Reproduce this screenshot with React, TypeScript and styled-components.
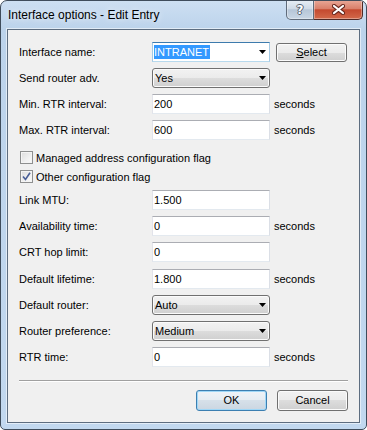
import styled, { createGlobalStyle } from "styled-components";

const GlobalStyle = createGlobalStyle`
  html, body {
    margin: 0;
    padding: 0;
    background: #ffffff;
  }
  body {
    font-family: "Liberation Sans", Arial, sans-serif;
    font-size: 11px;
    color: #000000;
  }
`;

const Window = styled.div`
  width: 367px;
  height: 430px;
  box-sizing: border-box;
  border: 1px solid #3f4c5b;
  border-radius: 7px 7px 5px 5px;
  background: linear-gradient(180deg, #cddff2 0, #bcd3eb 28px, #c2d8ef 100%);
  display: flex;
  flex-direction: column;
  overflow: hidden;
`;

const TitleBar = styled.div`
  height: 28px;
  display: flex;
  align-items: flex-start;
  justify-content: space-between;
`;

const TitleText = styled.div`
  font-family: "Liberation Sans", Arial, sans-serif;
  font-size: 12px;
  line-height: 15px;
  padding: 7px 0 0 7px;
  text-shadow: 0 0 6px rgba(255, 255, 255, 0.9);
`;

const CaptionButtons = styled.div`
  display: flex;
  margin-top: -1px;
  margin-right: 3px;
`;

const CaptionButton = styled.div<{ $close?: boolean }>`
  height: 20px;
  width: ${(p) => (p.$close ? 49 : 28)}px;
  box-sizing: border-box;
  border: 1px solid ${(p) => (p.$close ? "#4f2a26" : "#5f6b7a")};
  border-top: none;
  border-left-width: ${(p) => (p.$close ? 0 : 1)}px;
  border-radius: ${(p) => (p.$close ? "0 0 5px 0" : "0 0 0 5px")};
  background: ${(p) =>
    p.$close
      ? "linear-gradient(180deg, #e9a999 0%, #d9806b 45%, #c4492f 52%, #d2694a 100%)"
      : "linear-gradient(180deg, #e8eff6 0%, #d0dbe7 45%, #b6c6d8 52%, #c9d7e5 100%)"};
  box-shadow: inset 0 0 0 1px rgba(255, 255, 255, 0.35);
  display: flex;
  align-items: center;
  justify-content: center;
`;

const HelpGlyph = styled.span`
  font-family: "DejaVu Sans", sans-serif;
  font-weight: bold;
  font-size: 12px;
  line-height: 12px;
  color: #ffffff;
  text-shadow: 1px 0 0 #55606e, -1px 0 0 #55606e, 0 1px 0 #55606e, 0 -1px 0 #55606e;
`;

const Client = styled.div`
  flex: 1;
  margin: 0 6px 6px 6px;
  border: 1px solid #5d6d80;
  box-shadow: 0 0 0 1px rgba(255, 255, 255, 0.55);
  background: #f0f0f0;
  padding: 9px 11px 0 11px;
`;

const FieldRow = styled.div<{ $h?: number }>`
  display: grid;
  grid-template-columns: 129px 118px auto;
  column-gap: 4px;
  align-items: center;
  height: ${(p) => p.$h ?? 26}px;
`;

const Label = styled.span`
  white-space: nowrap;
`;

const TextBox = styled.div`
  height: 20px;
  box-sizing: border-box;
  border: 1px solid;
  border-color: #abadb3 #dbdfe6 #e3e9ef #e2e3ea;
  background: #ffffff;
  padding-left: 1px;
  line-height: 18px;
`;

const EditCombo = styled.div`
  height: 20px;
  box-sizing: border-box;
  border: 1px solid;
  border-color: #3d7bad #a4c9e3 #b7d9ed #a4c9e3;
  background: #ffffff;
  padding-left: 1px;
  padding-right: 3px;
  display: flex;
  align-items: center;
  justify-content: space-between;
`;

const Selected = styled.span`
  background: #3399ff;
  color: #ffffff;
  line-height: 14px;
  padding-right: 1px;
`;

const DropDown = styled.div`
  height: 20px;
  box-sizing: border-box;
  border: 1px solid #707070;
  border-radius: 3px;
  background: linear-gradient(180deg, #f2f2f2 0%, #ebebeb 50%, #dddddd 50%, #cfcfcf 100%);
  box-shadow: inset 0 0 0 1px #fbfbfb;
  padding-left: 2px;
  padding-right: 3px;
  display: flex;
  align-items: center;
  justify-content: space-between;
`;

const Unit = styled.span``;

const Button = styled.div<{ $default?: boolean }>`
  width: 71px;
  height: 21px;
  box-sizing: border-box;
  border: 1px solid ${(p) => (p.$default ? "#3c7fb1" : "#707070")};
  border-radius: 3px;
  background: ${(p) =>
    p.$default
      ? "linear-gradient(180deg, #eef3f8 0%, #e5ecf2 50%, #d6e0e9 50%, #cbd6e1 100%)"
      : "linear-gradient(180deg, #f2f2f2 0%, #ebebeb 50%, #dddddd 50%, #cfcfcf 100%)"};
  box-shadow: inset 0 0 0 1px ${(p) => (p.$default ? "#9fd7f7" : "#fbfbfb")};
  display: flex;
  align-items: center;
  justify-content: center;
  line-height: 13px;

  u {
    text-decoration: underline;
  }
`;

const SelectButton = styled(Button)`
  height: 19px;
  margin-left: 2px;
`;

const CheckRow = styled.div<{ $first?: boolean }>`
  display: flex;
  align-items: center;
  gap: 3px;
  height: 19px;
  padding-left: 1px;
  margin-top: ${(p) => (p.$first ? 5 : 0)}px;
`;

const CheckBox = styled.div`
  width: 13px;
  height: 13px;
  box-sizing: border-box;
  border: 1px solid #8e8f8f;
  background: linear-gradient(135deg, #dcdcdc 0%, #f0f0f0 60%, #fbfbfb 100%);
  box-shadow: inset 0 0 0 1px #f4f4f4;
  display: flex;
  align-items: center;
  justify-content: center;
`;

const Separator = styled.div`
  margin-top: 10px;
  border-top: 1px solid #a0a0a0;
  border-bottom: 1px solid #ffffff;
`;

const ButtonBar = styled.div`
  display: flex;
  justify-content: flex-end;
  gap: 10px;
  margin-top: 8px;
`;

const Arrow = () => (
  <svg width="7" height="4" viewBox="0 0 7 4">
    <path d="M0 0 H7 L3.5 4 Z" fill="#000" />
  </svg>
);

const CloseGlyph = () => (
  <svg width="13" height="11" viewBox="0 0 13 11">
    <path d="M2 2 L11 9 M11 2 L2 9" stroke="#6b2a20" strokeWidth="4.2" strokeLinecap="round" />
    <path d="M2 2 L11 9 M11 2 L2 9" stroke="#ffffff" strokeWidth="2.2" strokeLinecap="round" />
  </svg>
);

const Check = () => (
  <svg width="9" height="9" viewBox="0 0 9 9">
    <path d="M1 4.5 L3.5 7.5 L8 0.8" stroke="#4a5f97" strokeWidth="1.6" fill="none" />
  </svg>
);

type Field = { label: string; kind: "text" | "drop"; value: string; unit?: boolean; h?: number };

const topFields: Field[] = [
  { label: "Min. RTR interval:", kind: "text", value: "200", unit: true },
  { label: "Max. RTR interval:", kind: "text", value: "600", unit: true },
];

const lowerFields: Field[] = [
  { label: "Link MTU:", kind: "text", value: "1.500", h: 27 },
  { label: "Availability time:", kind: "text", value: "0", unit: true },
  { label: "CRT hop limit:", kind: "text", value: "0" },
  { label: "Default lifetime:", kind: "text", value: "1.800", unit: true, h: 27 },
  { label: "Default router:", kind: "drop", value: "Auto" },
  { label: "Router preference:", kind: "drop", value: "Medium" },
  { label: "RTR time:", kind: "text", value: "0", unit: true },
];

const renderField = (f: Field) => (
  <FieldRow key={f.label} $h={f.h}>
    <Label>{f.label}</Label>
    {f.kind === "text" ? (
      <TextBox>{f.value}</TextBox>
    ) : (
      <DropDown>
        <span>{f.value}</span>
        <Arrow />
      </DropDown>
    )}
    {f.unit ? <Unit>seconds</Unit> : <span />}
  </FieldRow>
);

export default function App() {
  return (
    <>
      <GlobalStyle />
      <Window>
        <TitleBar>
          <TitleText>Interface options - Edit Entry</TitleText>
          <CaptionButtons>
            <CaptionButton>
              <HelpGlyph>?</HelpGlyph>
            </CaptionButton>
            <CaptionButton $close>
              <CloseGlyph />
            </CaptionButton>
          </CaptionButtons>
        </TitleBar>
        <Client>
          <FieldRow>
            <Label>Interface name:</Label>
            <EditCombo>
              <Selected>INTRANET</Selected>
              <Arrow />
            </EditCombo>
            <SelectButton>
              <span>
                <u>S</u>elect
              </span>
            </SelectButton>
          </FieldRow>
          <FieldRow>
            <Label>Send router adv.</Label>
            <DropDown>
              <span>Yes</span>
              <Arrow />
            </DropDown>
            <span />
          </FieldRow>
          {topFields.map(renderField)}
          <CheckRow $first>
            <CheckBox />
            <span>Managed address configuration flag</span>
          </CheckRow>
          <CheckRow>
            <CheckBox>
              <Check />
            </CheckBox>
            <span>Other configuration flag</span>
          </CheckRow>
          {lowerFields.map(renderField)}
          <Separator />
          <ButtonBar>
            <Button $default>OK</Button>
            <Button>Cancel</Button>
          </ButtonBar>
        </Client>
      </Window>
    </>
  );
}
